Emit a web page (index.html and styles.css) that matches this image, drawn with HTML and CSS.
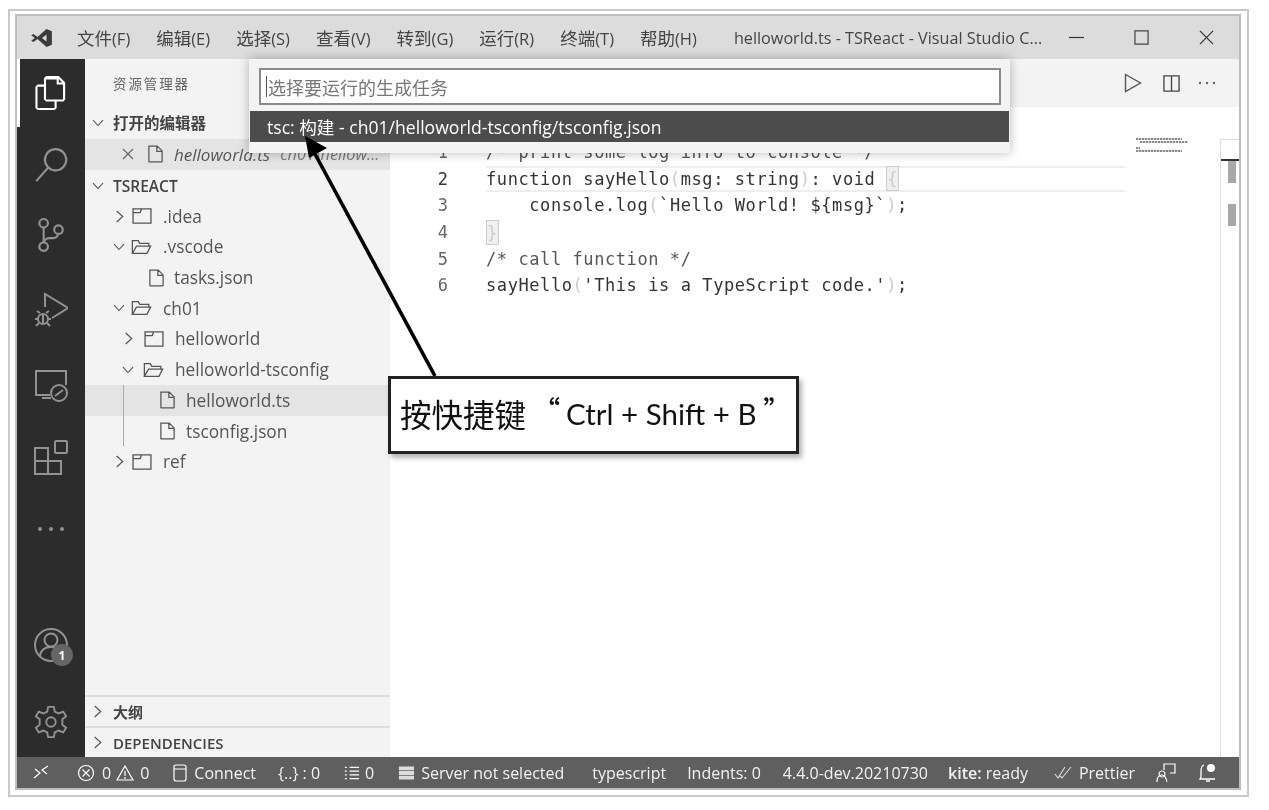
FILE: index.html
```html
<!DOCTYPE html>
<html lang="zh">
<head>
<meta charset="utf-8">
<title>helloworld.ts - TSReact - Visual Studio Code</title>
<link rel="stylesheet" href="styles.css">
</head>
<body>
<svg class="defs" width="0" height="0" aria-hidden="true">
  <symbol id="chev-r" viewBox="0 0 12 16"><path d="M3 2l6.5 6L3 14" fill="none" stroke="currentColor" stroke-width="1.300"/></symbol>
  <symbol id="chev-d" viewBox="0 0 16 12"><path d="M2 2.500l6 6.500 6-6.500" fill="none" stroke="currentColor" stroke-width="1.300"/></symbol>
  <symbol id="fold" viewBox="0 0 21 17"><path d="M1 1h19v15H1zM1 5h7.500l1.500-4" fill="none" stroke="currentColor" stroke-width="1.400"/></symbol>
  <symbol id="fold-o" viewBox="0 0 23 17"><path d="M1.500 15.500V1.500H8l1.500 3h10v3M1.500 15.500h16l4-8H6z" fill="none" stroke="currentColor" stroke-width="1.400"/></symbol>
  <symbol id="file" viewBox="0 0 17 20"><path d="M1 1h9.500L16 6.500V18.500q0 .5-.5.5h-14q-.5 0-.5-.5zM10 1v6h6" fill="none" stroke="currentColor" stroke-width="1.400"/></symbol>
</svg>
<div class="frame">
  <div class="window">
    <header class="titlebar">
      <svg class="logo" viewBox="0 0 24 20"><path d="M17 0l6 2.500v15L17 20 7 11l-4.500 3.500L0 13l4-3-4-3 2.500-1.500L7 9zM17 6l-5 4 5 4z" fill="#3c3c3c" fill-rule="evenodd"/></svg>
      <nav class="menu">
        <span><span class="cn">文件</span>(F)</span><span><span class="cn">编辑</span>(E)</span><span><span class="cn">选择</span>(S)</span><span><span class="cn">查看</span>(V)</span><span><span class="cn">转到</span>(G)</span><span><span class="cn">运行</span>(R)</span><span><span class="cn">终端</span>(T)</span><span><span class="cn">帮助</span>(H)</span>
      </nav>
      <div class="wintitle">helloworld.ts - TSReact - Visual Studio C...</div>
      <div class="winctl">
        <svg viewBox="0 0 16 16"><path d="M0 8h16" stroke="#333" stroke-width="1.300"/></svg>
        <svg viewBox="0 0 16 16"><path d="M1 1h14v14H1z" fill="none" stroke="#444" stroke-width="1.300"/></svg>
        <svg viewBox="0 0 16 16"><path d="M1 1l14 14M15 1L1 15" stroke="#333" stroke-width="1.300"/></svg>
      </div>
    </header>

    <div class="main">
      <aside class="activity">
        <div class="act-top">
          <div class="act act-on"><svg class="solid" viewBox="0 0 24 24"><path fill="#fff" d="M17.500 0h-9L7 1.500V6H2.500L1 7.500v15.070L2.500 24h12.070L16 22.570V18h4.700l1.300-1.430V4.500L17.500 0zm0 2.120l2.380 2.380H17.500V2.120zm-3 20.380h-12v-15H7v9.070L8.500 18h6v4.500zm6-6h-12v-14H16V6h4.500v10.500z"/></svg></div>
          <div class="act"><svg class="solid" viewBox="0 0 24 24"><path fill="#929292" d="M15.250 0a8.250 8.250 0 0 0-6.180 13.720L1 22.880l1.120 1 8.050-9.120A8.251 8.251 0 1 0 15.250.01V0zm0 15a6.750 6.750 0 1 1 0-13.500 6.750 6.750 0 0 1 0 13.500z"/></svg></div>
          <div class="act"><svg class="solid" viewBox="0 0 24 24"><path fill="#929292" d="M21.007 8.222A3.738 3.738 0 0 0 15.045 5.200a3.737 3.737 0 0 0 1.156 6.583 2.988 2.988 0 0 1-2.668 1.670h-2.990a4.456 4.456 0 0 0-2.989 1.165V7.400a3.737 3.737 0 1 0-1.494 0v9.117a3.776 3.776 0 1 0 1.816.099 2.990 2.990 0 0 1 2.668-1.667h2.990a4.484 4.484 0 0 0 4.223-3.039 3.736 3.736 0 0 0 3.250-3.687zM4.565 3.738a2.242 2.242 0 1 1 4.484 0 2.242 2.242 0 0 1-4.484 0zm4.484 16.441a2.242 2.242 0 1 1-4.484 0 2.242 2.242 0 0 1 4.484 0zm8.221-9.715a2.242 2.242 0 1 1 0-4.485 2.242 2.242 0 0 1 0 4.485z"/></svg></div>
          <div class="act"><svg viewBox="0 0 34 36"><g fill="none" stroke="#929292" stroke-width="2"><path d="M11 15V2l23 14-16 10"/><circle cx="9" cy="27" r="5"/><path d="M6 21l-3-2M12 21l3-2M1 27h3M14 27h3M5 31l-3 3M13 31l3 3M9 22v10"/></g></svg></div>
          <div class="act"><svg viewBox="0 0 34 36"><g fill="none" stroke="#929292" stroke-width="2"><path d="M16 28H2V4h30v14M8 31h9"/><circle cx="25" cy="26" r="8"/><path d="M21 29l4-3M29 23l-4 3"/></g></svg></div>
          <div class="act"><svg viewBox="0 0 34 36"><g fill="none" stroke="#929292" stroke-width="2"><path d="M1 8h13v13H1zM1 21h13v13H1zM14 21h13v13H14z"/><rect x="21" y="1" width="12" height="12" rx="1"/></g></svg></div>
          <div class="act"><svg viewBox="0 0 34 36"><g fill="#929292"><circle cx="6" cy="18" r="2"/><circle cx="17" cy="18" r="2"/><circle cx="28" cy="18" r="2"/></g></svg></div>
        </div>
        <div class="act-bottom">
          <div class="act act-account">
            <svg viewBox="0 0 34 36"><g fill="none" stroke="#929292" stroke-width="2"><circle cx="17" cy="18" r="16"/><circle cx="17" cy="13" r="6.500"/><path d="M6 29c1-7 6-9 11-9s10 2 11 9"/></g></svg>
            <span class="badge">1</span>
          </div>
          <div class="act act-gear"><svg viewBox="0 0 36 36"><g fill="none" stroke="#929292" stroke-width="2"><circle cx="18" cy="18" r="5"/><path d="M15 2h6l1 5 4 2 5-2 3 5-4 3v6l4 3-3 5-5-2-4 2-1 5h-6l-1-5-4-2-5 2-3-5 4-3v-6L2 12l3-5 5 2 4-2z"/></g></svg></div>
        </div>
      </aside>

      <aside class="sidebar">
        <div class="side-head">资源管理器</div>
        <div class="row sec first"><svg class="ic chev-d"><use href="#chev-d"/></svg><b>打开的编辑器</b></div>
        <div class="row open-file">
          <svg class="x" viewBox="0 0 12 12"><path d="M1 1l10 10M11 1L1 11" stroke="#666" stroke-width="1.200"/></svg>
          <svg class="ic file"><use href="#file"/></svg>
          <i>helloworld.ts</i><i class="dim">ch01\hellow...</i>
        </div>
        <div class="row sec"><svg class="ic chev-d"><use href="#chev-d"/></svg><b>TSREACT</b></div>
        <div class="tree">
          <div class="row l1"><svg class="ic chev-r"><use href="#chev-r"/></svg><svg class="ic fold"><use href="#fold"/></svg>.idea</div>
          <div class="row l1"><svg class="ic chev-d"><use href="#chev-d"/></svg><svg class="ic fold-o"><use href="#fold-o"/></svg>.vscode</div>
          <div class="row f2"><svg class="ic file"><use href="#file"/></svg>tasks.json</div>
          <div class="row l1"><svg class="ic chev-d"><use href="#chev-d"/></svg><svg class="ic fold-o"><use href="#fold-o"/></svg>ch01</div>
          <div class="row l2"><svg class="ic chev-r"><use href="#chev-r"/></svg><svg class="ic fold"><use href="#fold"/></svg>helloworld</div>
          <div class="row l2"><svg class="ic chev-d"><use href="#chev-d"/></svg><svg class="ic fold-o"><use href="#fold-o"/></svg>helloworld-tsconfig</div>
          <div class="row f3 sel"><svg class="ic file"><use href="#file"/></svg>helloworld.ts</div>
          <div class="row f3 guide"><svg class="ic file"><use href="#file"/></svg>tsconfig.json</div>
          <div class="row l1"><svg class="ic chev-r"><use href="#chev-r"/></svg><svg class="ic fold"><use href="#fold"/></svg>ref</div>
        </div>
        <div class="panes">
          <div class="pane"><svg class="ic chev-r"><use href="#chev-r"/></svg><b>大纲</b></div>
          <div class="pane"><svg class="ic chev-r"><use href="#chev-r"/></svg><b>DEPENDENCIES</b></div>
        </div>
      </aside>

      <section class="editor">
        <div class="tabbar">
          <svg class="t-run" viewBox="0 0 18 20"><path d="M1.500 1.500L16.500 10 1.500 18.500z" fill="none" stroke="#555" stroke-width="1.400"/></svg>
          <svg class="t-split" viewBox="0 0 18 18"><path d="M1 1h16v16H1zM9 1v16" fill="none" stroke="#444" stroke-width="1.400"/></svg>
          <svg class="t-more" viewBox="0 0 18 4"><g fill="#666"><circle cx="2" cy="2" r="1.200"/><circle cx="9" cy="2" r="1.200"/><circle cx="16" cy="2" r="1.200"/></g></svg>
        </div>
        <div class="edit-body">
          <div class="code">
            <div class="ln"><span class="num">1</span><span class="txt cm">/* print some log info to console */</span></div>
            <div class="ln cur"><span class="num on">2</span><span class="txt">function sayHello<u>(</u>msg: string<u>)</u>: void <u class="box">{</u></span></div>
            <div class="ln"><span class="num">3</span><span class="txt">    console.log<u>(</u>`Hello World! ${msg}`<u>)</u>;</span></div>
            <div class="ln"><span class="num">4</span><span class="txt"><u class="box">}</u></span></div>
            <div class="ln"><span class="num">5</span><span class="txt cm">/* call function */</span></div>
            <div class="ln"><span class="num">6</span><span class="txt">sayHello<u>(</u>'This is a TypeScript code.'<u>)</u>;</span></div>
          </div>
          <div class="minimap">
            <div class="mm w1"></div><div class="mm w2"></div><div class="mm w3"></div><div class="mm w4"></div>
          </div>
          <div class="overview">
            <div class="ov-tick"></div>
            <div class="ov-block"></div>
            <div class="ov-block second"></div>
          </div>
        </div>
      </section>

      <div class="quick">
        <div class="qi"><span class="caret"></span>选择要运行的生成任务</div>
        <div class="qrow">tsc: 构建 - ch01/helloworld-tsconfig/tsconfig.json</div>
      </div>
      <svg class="arrow" viewBox="0 0 200 260"><path d="M152 260L32 38" stroke="#000" stroke-width="3.600" fill="none"/><path d="M22 20L44 32 26 42z" fill="#000"/></svg>
      <div class="callout"><span class="cjk">按快捷键</span><span class="qm open">“</span><span class="keys">Ctrl + Shift + B</span><span class="qm close">”</span></div>
    </div>

    <footer class="status">
      <span class="s s-remote"><svg viewBox="0 0 16 16"><path d="M1 13l6-5-5-4M15 1L9 5l5 4" fill="none" stroke="#fff" stroke-width="1.200"/></svg></span>
      <span class="s s-err"><svg viewBox="0 0 18 18"><circle cx="9" cy="9" r="7.500" fill="none" stroke="#fff" stroke-width="1.200"/><path d="M5.500 5.500l7 7M12.500 5.500l-7 7" stroke="#fff" stroke-width="1.200"/></svg>0<svg class="warn" viewBox="0 0 18 18"><path d="M9 2L17 16H1zM9 7v5M9 13v2" fill="none" stroke="#fff" stroke-width="1.200"/></svg>0</span>
      <span class="s s-conn"><svg viewBox="0 0 14 18"><path d="M1 3q0-2 2-2h8q2 0 2 2v12q0 2-2 2H3q-2 0-2-2zM1 5h12" fill="none" stroke="#fff" stroke-width="1.200"/></svg>Connect</span>
      <span class="s s-br">{..} : 0</span>
      <span class="s s-list"><svg viewBox="0 0 18 16"><path d="M7 2h10M7 6h10M7 10h10M7 14h10M2 2h2M2 6h2M2 10h2M2 14h2" stroke="#fff" stroke-width="1.400"/></svg>0</span>
      <span class="s s-srv"><svg viewBox="0 0 18 16"><path d="M1 1h16v4H1zM1 6h16v4H1zM1 11h16v4H1z" fill="#ddd"/></svg>Server not selected</span>
      <span class="s s-ts">typescript</span>
      <span class="s s-ind">Indents: 0</span>
      <span class="s s-ver">4.4.0-dev.20210730</span>
      <span class="s s-kite"><span><b>kite:</b> ready</span></span>
      <span class="s s-pr"><svg viewBox="0 0 20 14"><path d="M1 8l3 4L11 1M6 10l2 2L17 1" fill="none" stroke="#ddd" stroke-width="1.100"/></svg>Prettier</span>
      <span class="s s-fb"><svg viewBox="0 0 20 20"><path d="M8 7V1h11v9h-5M6 8a3 3 0 1 0 .1 0M1 19c0-5 2-7 5-7s4 2 5 7" fill="none" stroke="#fff" stroke-width="1.200"/></svg></span>
      <span class="s s-bell"><svg viewBox="0 0 18 20"><path d="M5 2Q2 3 2 8v6l-1 2h15M7 18h4" fill="none" stroke="#fff" stroke-width="1.300"/><circle cx="12" cy="5" r="4" fill="#fff"/></svg></span>
    </footer>
  </div>
</div>
</body>
</html>
```
FILE: styles.css
```css
* { box-sizing: border-box; }
html, body { margin: 0; height: 100%; overflow: hidden; background: #fff; }
body { padding: 9px 0 0 8px; font-family: "Open Sans", "Noto Sans CJK SC", sans-serif; color: #555; }
.defs { position: absolute; }
svg { display: block; flex: none; }

.frame { width: 1241px; height: 788px; border: 2px solid #c9c9c9; padding: 3px 6px 5px 5px; filter: blur(.45px); background: #fff; }
.window { position: relative; width: 100%; height: 100%; border: 2px solid #bdbdbd; display: flex; flex-direction: column; overflow: hidden; }

.titlebar { height: 43px; flex: none; background: #dcdcdc; display: flex; align-items: center; padding-left: 14px; color: #444; font-size: 16.500px; }
.logo { width: 22px; height: 18px; }
.menu { display: flex; margin-left: 24px; gap: 26px; }
.menu span { white-space: nowrap; }
.menu .cn { font-size: 17.500px; }
.wintitle { margin-left: 37px; width: 312px; white-space: nowrap; font-size: 16.200px; }
.winctl { display: flex; gap: 50px; margin-left: 23px; }
.winctl svg { width: 15px; height: 15px; }

.main { position: relative; flex: 1; min-height: 0; display: flex; }

.activity { width: 68px; flex: none; background: #2c2c2c; display: flex; flex-direction: column; justify-content: space-between; }
.act-top { display: grid; grid-template-rows: 68px 76px 64px 86px 64px 82px 60px; }
.act { display: flex; align-items: center; justify-content: center; position: relative; }
.act svg { width: 34px; height: 36px; }
.act svg.solid { width: 34px; height: 34px; }
.act-on { box-shadow: inset 3px 0 0 #fff; }
.act-bottom { display: flex; flex-direction: column; }
.act-account { height: 76px; margin-bottom: 4px; }
.act-gear { height: 70px; }
.badge { position: absolute; left: 34px; top: 37px; width: 22px; height: 22px; border-radius: 50%; background: #666; color: #fff; font-size: 12px; font-weight: 700; display: flex; align-items: center; justify-content: center; }

.sidebar { width: 305px; flex: none; background: #f3f3f3; display: flex; flex-direction: column; font-size: 17.300px; }
.side-head { height: 48px; flex: none; padding: 16px 0 0 28px; font-size: 13.500px; line-height: 18px; color: #666; letter-spacing: 1.900px; }
.row { height: 30.700px; flex: none; display: flex; align-items: center; white-space: nowrap; position: relative; color: #555; }
.row.sec { font-size: 15.500px; padding-left: 6px; color: #444; }
.row.sec.first { height: 31.700px; }
.row.sec .chev-d { margin-right: 8px; }
b { font-weight: 600; }
.ic { color: #555; }
.chev-d { width: 14px; height: 10px; }
.chev-r { width: 11px; height: 15px; }
.fold { width: 20px; height: 16px; }
.fold-o { width: 21px; height: 16px; }
.file { width: 15px; height: 18px; }
.open-file { height: 31.500px; background: #e4e4e4; padding-left: 37px; }
.x { width: 12px; height: 12px; margin-right: 14px; }
.open-file .file { margin-right: 11px; }
.open-file i { font-size: 17px; }
.open-file .dim { font-size: 16.300px; margin-left: 10px; color: #777; }
.l1 { padding-left: 28px; }
.l2 { padding-left: 37px; }
.l1 .chev-r { margin: 0 7px 0 1px; }
.l1 .chev-d { margin: 0 5px 0 -1px; }
.l2 .chev-r { margin: 0 10px 0 1px; }
.l2 .chev-d { margin: 0 8px 0 -1px; }
.l1 .fold, .l1 .fold-o, .l2 .fold, .l2 .fold-o { margin-right: 11px; }
.f2 { padding-left: 64px; }
.f2 .file { margin-right: 10px; }
.f3 { padding-left: 75px; }
.f3 .file { margin-right: 11px; }
.sel { background: #e4e4e4; }
.sel::before, .guide::before { content: ""; position: absolute; left: 38px; top: 0; bottom: 0; width: 1px; background: #aaa; }
.panes { margin-top: auto; }
.pane { height: 31px; display: flex; align-items: center; border-top: 2px solid #ddd; padding-left: 7px; font-size: 15px; color: #444; }
.pane .chev-r { margin-right: 10px; }

.editor { flex: 1; min-width: 0; display: flex; flex-direction: column; background: #fff; }
.tabbar { height: 48px; flex: none; background: #f3f3f3; display: flex; justify-content: flex-end; align-items: center; padding-right: 23px; }
.t-run { width: 18px; height: 20px; margin-right: 21px; }
.t-split { width: 17px; height: 17px; margin-right: 18px; }
.t-more { width: 18px; height: 4px; }
.edit-body { flex: 1; position: relative; padding-top: 32px; display: flex; }
.code { width: 735px; flex: none; font-family: "DejaVu Sans Mono", monospace; font-size: 17px; letter-spacing: .58px; color: #444; }
.ln { height: 26.600px; display: flex; align-items: center; white-space: pre; }
.cur .txt { flex: 1; align-self: stretch; display: flex; align-items: center; white-space: pre; box-shadow: inset 0 2px 0 #eee, inset 0 -2px 0 #eee; }
.num { width: 58px; text-align: right; color: #666; margin-right: 38px; letter-spacing: 0; flex: none; }
.num.on { color: #333; }
.txt { color: #333; }
.cm { color: #555; }
u { text-decoration: none; color: #ccc; }
u.box { display: inline-block; height: 25px; line-height: 24px; width: 13px; background: #f0f0f0; border: 1px solid #ccc; }
.minimap { position: absolute; left: 746px; top: 31px; width: 54px; display: flex; flex-direction: column; gap: 1px; }
.mm { height: 2px; background: repeating-linear-gradient(90deg, #888 0 2px, #ddd 2px 3px); }
.w1 { width: 46px; } .w2 { width: 48px; margin-left: 4px; } .w3 { width: 4px; margin-top: 3px; } .w4 { width: 46px; }
.overview { position: absolute; right: 0; top: 32px; bottom: 0; width: 19px; border-left: 1px solid #ddd; border-top: 1px solid #ddd; }
.ov-tick { height: 2px; margin-top: 19px; background: #333; }
.ov-block { width: 8px; height: 22px; background: #a8a8a8; margin-left: 7px; }
.ov-block.second { margin-top: 21px; }

.quick { position: absolute; left: 232px; top: 0; width: 761px; height: 94px; background: #f3f3f3; box-shadow: 0 0 10px rgba(0,0,0,.28); padding: 9px 9px 0 10px; }
.qi { height: 37px; background: #fff; border: 2px solid #8a8a8a; display: flex; align-items: center; padding-left: 5px; font-size: 18px; color: #777; }
.caret { width: 1px; height: 21px; background: #555; margin-right: 1px; }
.qrow { margin: 6px -8px 0 -9px; height: 31px; background: #4c4c4c; color: #fff; font-size: 17.600px; display: flex; align-items: center; padding-left: 17px; white-space: nowrap; }
.arrow { position: absolute; left: 266px; top: 57px; width: 200px; height: 260px; }
.callout { position: absolute; left: 371px; top: 317px; width: 411px; height: 78px; background: #fff; border: 3px solid #222; box-shadow: 3px 4px 5px rgba(0,0,0,.3); display: flex; align-items: center; padding: 0 0 4px 9px; color: #111; white-space: nowrap; }
.cjk { font-size: 31.500px; font-family: "Noto Sans CJK SC", sans-serif; }
.keys { font-family: Lato, "Open Sans", sans-serif; font-size: 29.500px; }
.qm { font-size: 26px; font-family: "Noto Sans CJK SC", sans-serif; font-weight: 700; line-height: 1; }
.qm.open { margin: -8px 6px 0 8px; }
.qm.close { margin: -8px 0 0 7px; }

.status { height: 31px; flex: none; background: #5f5f5f; color: #f2f2f2; display: flex; align-items: center; font-size: 16px; white-space: nowrap; }
.s { display: flex; align-items: center; }
.s svg { width: 16px; height: 16px; }
.s-remote { margin-left: 16px; }
.s-err { margin-left: 28px; }
.s-err svg { width: 18px; height: 18px; margin-right: 7px; }
.s-err .warn { margin: 0 6px 0 5px; }
.s-conn { margin-left: 24px; }
.s-conn svg { width: 14px; height: 18px; margin-right: 7px; }
.s-br { margin-left: 22px; }
.s-list { margin-left: 23px; }
.s-list svg { width: 17px; margin-right: 5px; }
.s-srv { margin-left: 24px; }
.s-srv svg { width: 17px; margin-right: 6px; }
.s-ts { margin-left: 28px; }
.s-ind { margin-left: 21px; }
.s-ver { margin-left: 22px; }
.s-kite { margin-left: 20px; }
.s-pr { margin-left: 26px; }
.s-pr svg { width: 20px; height: 14px; margin-right: 5px; }
.s-fb { margin-left: 21px; }
.s-fb svg { width: 20px; height: 20px; }
.s-bell { margin-left: 23px; }
.s-bell svg { width: 18px; height: 20px; }
```
